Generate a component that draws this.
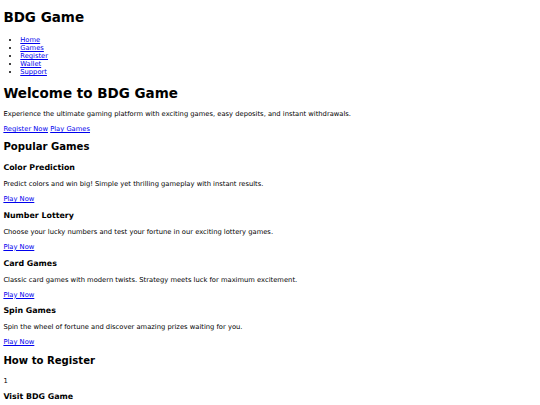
const games = [
  {
    title: 'Color Prediction',
    text: 'Predict colors and win big! Simple yet thrilling gameplay with instant results.',
  },
  {
    title: 'Number Lottery',
    text: 'Choose your lucky numbers and test your fortune in our exciting lottery games.',
  },
  {
    title: 'Card Games',
    text: 'Classic card games with modern twists. Strategy meets luck for maximum excitement.',
  },
  {
    title: 'Spin Games',
    text: 'Spin the wheel of fortune and discover amazing prizes waiting for you.',
  },
];

const steps = [
  { title: 'Visit BDG Game', text: 'Open the official BDG Game website on your phone or computer.' },
  { title: 'Create Account', text: 'Fill in your mobile number and set a secure password.' },
  { title: 'Start Playing', text: 'Make your first deposit and enjoy all the games.' },
];

const link = 'text-[#0000ee] underline';
const h1 = 'my-[9.05px] text-[13.5px] leading-[16.03px] font-bold';
const h2 = 'mt-[8.4px] mb-[9.5px] text-[10.125px] leading-[12.5px] font-bold';
const h3 = 'my-[7.9px] text-[7.9px] leading-[9.1px] font-bold';
const p = 'my-[6.75px]';

export default function App() {
  return (
    <div className="m-[3.375px] font-['DejaVu_Sans',sans-serif] text-[6.75px] leading-[8.02px] text-black">
      <header>
        <h1 className="mt-[9.05px] mb-[11px] text-[13.5px] leading-[16.03px] font-bold">BDG Game</h1>
        <nav>
          <ul className="my-[6.75px] list-disc pl-[16.875px]">
            <li><a href="#" className={link}>Home</a></li>
            <li><a href="#" className={link}>Games</a></li>
            <li><a href="#" className={link}>Register</a></li>
            <li><a href="#" className={link}>Wallet</a></li>
            <li><a href="#" className={link}>Support</a></li>
          </ul>
        </nav>
      </header>

      <section>
        <h1 className={h1}>Welcome to BDG Game</h1>
        <p className={p}>
          Experience the ultimate gaming platform with exciting games, easy deposits, and instant withdrawals.
        </p>
        <p className={p}>
          <a href="#" className={link}>Register Now</a> <a href="#" className={link}>Play Games</a>
        </p>
      </section>

      <section>
        <h2 className={h2}>Popular Games</h2>
        {games.map((g) => (
          <div key={g.title}>
            <h3 className={h3}>{g.title}</h3>
            <p className={p}>{g.text}</p>
            <a href="#" className={link}>Play Now</a>
          </div>
        ))}
      </section>

      <section>
        <h2 className={h2}>How to Register</h2>
        {steps.map((s, i) => (
          <div key={s.title}>
            <p className={p}>{i + 1}</p>
            <h3 className={h3}>{s.title}</h3>
            <p className={p}>{s.text}</p>
          </div>
        ))}
      </section>
    </div>
  );
}
